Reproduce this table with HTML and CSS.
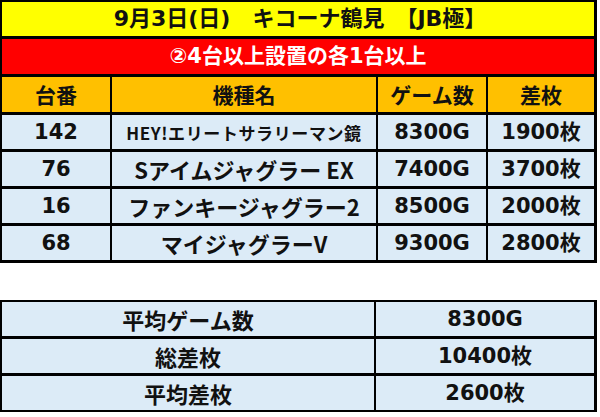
FILE: index.html
```html
<!DOCTYPE html>
<html lang="ja">
<head>
<meta charset="utf-8">
<title>9月3日(日) キコーナ鶴見</title>
<link rel="stylesheet" href="styles.css">
</head>
<body>
<div class="board">
  <div class="cell title span">9月3日(日)　キコーナ鶴見　【JB極】</div>
  <div class="cell cond span">②4台以上設置の各1台以上</div>
  <div class="cell head">台番</div>
  <div class="cell head">機種名</div>
  <div class="cell head">ゲーム数</div>
  <div class="cell head">差枚</div>

  <div class="cell data">142</div>
  <div class="cell data name small">HEY!エリートサラリーマン鏡</div>
  <div class="cell data">8300G</div>
  <div class="cell data">1900枚</div>

  <div class="cell data">76</div>
  <div class="cell data name">Sアイムジャグラー EX</div>
  <div class="cell data">7400G</div>
  <div class="cell data">3700枚</div>

  <div class="cell data">16</div>
  <div class="cell data name">ファンキージャグラー2</div>
  <div class="cell data">8500G</div>
  <div class="cell data">2000枚</div>

  <div class="cell data">68</div>
  <div class="cell data name">マイジャグラーV</div>
  <div class="cell data">9300G</div>
  <div class="cell data">2800枚</div>
</div>

<div class="summary">
  <div class="cell data label">平均ゲーム数</div>
  <div class="cell data">8300G</div>
  <div class="cell data label">総差枚</div>
  <div class="cell data">10400枚</div>
  <div class="cell data label">平均差枚</div>
  <div class="cell data">2600枚</div>
</div>
</body>
</html>
```
FILE: styles.css
```css
html, body {
  margin: 0;
  padding: 0;
  background: #ffffff;
}

body {
  width: 600px;
  height: 417px;
  overflow: hidden;
  font-family: "DejaVu Sans", "Noto Sans CJK JP", sans-serif;
  font-weight: 700;
  color: #111;
}

.board {
  width: 597px;
  box-sizing: border-box;
  display: grid;
  grid-template-columns: 108px 264px 108px 106px;
  grid-template-rows: 34px 35px 35px 34px 34px 34px 34px;
  column-gap: 2px;
  row-gap: 3px;
  padding: 2px 3px 3px 2px;
  background: #000;
}

.cell {
  display: flex;
  align-items: center;
  justify-content: center;
  font-size: 21px;
  line-height: 1;
  white-space: nowrap;
}

.span {
  grid-column: 1 / -1;
}

.title {
  background: #ffff00;
  color: #111;
  font-size: 22px;
  padding-left: 4px;
}

.cond {
  background: #ff0000;
  color: #ffffff;
}

.head {
  background: #ffc000;
  font-family: "Noto Sans CJK JP", sans-serif;
}

.data {
  background: #dcebf7;
}

.name {
  font-family: "Noto Sans CJK JP", sans-serif;
  font-size: 22px;
}

.name.small {
  font-size: 17px;
  letter-spacing: 0.6px;
}

.summary {
  width: 597px;
  box-sizing: border-box;
  margin-top: 37px;
  display: grid;
  grid-template-columns: 372px 218px;
  grid-template-rows: 34px 34px 34px;
  column-gap: 2px;
  row-gap: 3px;
  padding: 2px 3px 2px 2px;
  background: #000;
}

.label {
  font-family: "Noto Sans CJK JP", sans-serif;
  font-size: 22px;
}
```
